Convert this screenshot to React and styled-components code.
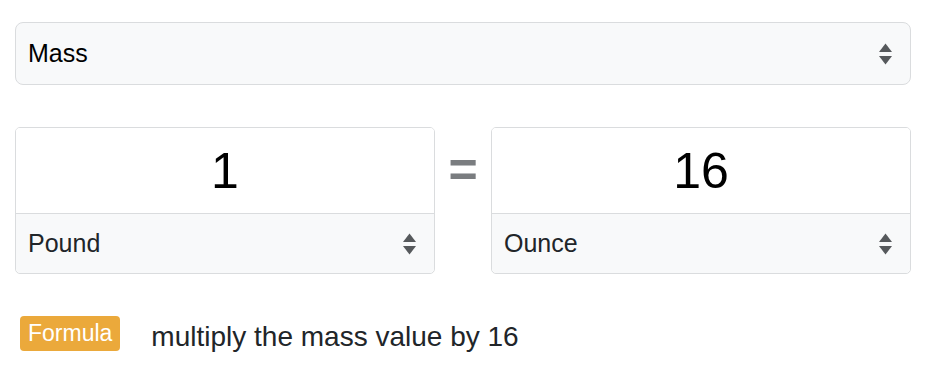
import React from 'react';
import styled, { createGlobalStyle } from 'styled-components';

const GlobalStyle = createGlobalStyle`
  html, body {
    margin: 0;
    padding: 0;
    background: #ffffff;
    font-family: 'Liberation Sans', Arial, sans-serif;
  }
`;

const Page = styled.div`
  padding: 22px 15px 0 15px;
  width: 926px;
  box-sizing: border-box;
`;

const SelectBox = styled.div`
  display: flex;
  align-items: center;
  justify-content: space-between;
  box-sizing: border-box;
  height: ${props => props.height || 63}px;
  padding: 0 17px 0 12px;
  background: #f8f9fa;
  border: ${props => (props.flat ? 'none' : '1.5px solid #dadcde')};
  border-radius: ${props => (props.flat ? '0 0 5px 5px' : '8px')};
  font-size: 25px;
  color: ${props => props.color || '#000'};
`;

const Converter = styled.div`
  display: grid;
  grid-template-columns: 420px 56px 420px;
  margin-top: 42px;
`;

const UnitCard = styled.div`
  display: flex;
  flex-direction: column;
  box-sizing: border-box;
  height: 147px;
  border: 1.5px solid #dadcde;
  border-radius: 5px;
  overflow: hidden;
`;

const Amount = styled.div`
  display: flex;
  align-items: center;
  justify-content: center;
  height: 85px;
  background: #fff;
  border-bottom: 1.5px solid #dadcde;
  font-size: 50px;
  color: #000;
`;

const Equals = styled.div`
  display: flex;
  align-items: center;
  justify-content: center;
  height: 86px;
  font-size: 50px;
  font-weight: 700;
  color: #7a7d80;
`;

const FormulaRow = styled.div`
  display: flex;
  align-items: center;
  margin-top: 39px;
  padding-left: 5px;
`;

const Badge = styled.span`
  display: inline-flex;
  align-items: center;
  justify-content: center;
  height: 35px;
  padding: 0 8px;
  background: #eba93b;
  border-radius: 4px;
  color: #fff;
  font-size: 23px;
`;

const FormulaText = styled.span`
  margin: 8px 0 0 31px;
  font-size: 28px;
  color: #212529;
`;

function SortArrows() {
  return (
    <svg width="15" height="22" viewBox="0 0 15 22">
      <path d="M7.5 0.5 L14 9 L1 9 Z" fill="#56595c" />
      <path d="M1 13 L14 13 L7.5 21.5 Z" fill="#56595c" />
    </svg>
  );
}

function UnitPanel({ value, unit }) {
  return (
    <UnitCard>
      <Amount>{value}</Amount>
      <SelectBox flat height={59} color="#212529">
        <span>{unit}</span>
        <SortArrows />
      </SelectBox>
    </UnitCard>
  );
}

export default function App() {
  return (
    <Page>
      <GlobalStyle />
      <SelectBox>
        <span>Mass</span>
        <SortArrows />
      </SelectBox>
      <Converter>
        <UnitPanel value="1" unit="Pound" />
        <Equals>=</Equals>
        <UnitPanel value="16" unit="Ounce" />
      </Converter>
      <FormulaRow>
        <Badge>Formula</Badge>
        <FormulaText>multiply the mass value by 16</FormulaText>
      </FormulaRow>
    </Page>
  );
}
